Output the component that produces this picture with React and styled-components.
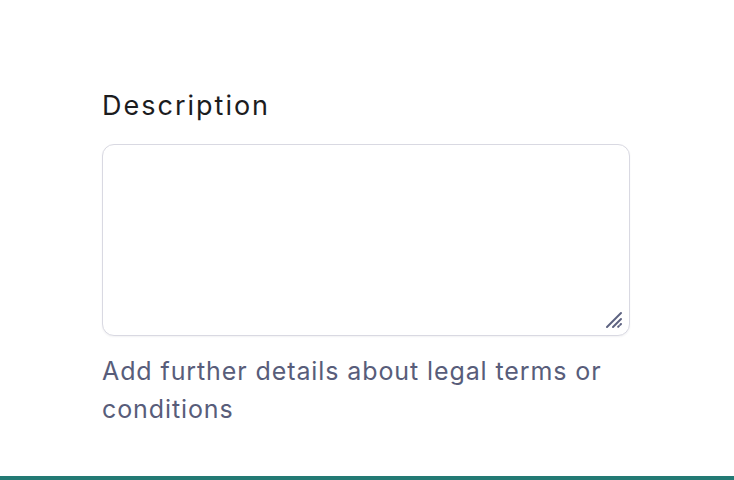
import styled, { createGlobalStyle } from "styled-components";

const GlobalStyle = createGlobalStyle`
  html, body {
    margin: 0;
    padding: 0;
    background: #ffffff;
    font-family: "Inter", "Liberation Sans", sans-serif;
  }
`;

const Page = styled.div`
  position: relative;
  height: 480px;
  box-sizing: border-box;
  padding: 86px 0 0 102px;
`;

const Field = styled.div`
  display: flex;
  flex-direction: column;
  width: 528px;
`;

const Label = styled.label`
  font-size: 27px;
  line-height: 40px;
  letter-spacing: 2px;
  color: #1c1c1e;
  margin-bottom: 18px;
`;

const AreaWrap = styled.div`
  position: relative;
  width: 528px;
  height: 192px;
`;

const TextArea = styled.textarea`
  box-sizing: border-box;
  display: block;
  width: 100%;
  height: 100%;
  border: 1px solid #d9d9e2;
  border-radius: 12px;
  box-shadow: 0 1px 2px rgba(30, 30, 60, 0.06);
  padding: 12px 16px;
  font-family: inherit;
  font-size: 20px;
  outline: none;
  resize: none;
`;

const Grip = styled.svg`
  position: absolute;
  right: 6px;
  bottom: 6px;
  width: 20px;
  height: 20px;
  pointer-events: none;
`;

const Hint = styled.p`
  margin: 16px 0 0;
  font-size: 25px;
  line-height: 38px;
  letter-spacing: 0.9px;
  color: #585d7a;
`;

const BottomBar = styled.div`
  position: absolute;
  left: 0;
  right: 0;
  bottom: 0;
  height: 4px;
  background: #237a74;
`;

export default function App() {
  return (
    <Page>
      <GlobalStyle />
      <Field>
        <Label htmlFor="desc">Description</Label>
        <AreaWrap>
          <TextArea id="desc" />
          <Grip viewBox="0 0 20 20">
            <g stroke="#5d6280" strokeWidth="2" strokeLinecap="round">
              <line x1="17" y1="3" x2="3" y2="17" />
              <line x1="17" y1="9" x2="9" y2="17" />
              <line x1="17" y1="14" x2="14" y2="17" strokeDasharray="1 2" />
            </g>
          </Grip>
        </AreaWrap>
        <Hint>Add further details about legal terms or conditions</Hint>
      </Field>
      <BottomBar />
    </Page>
  );
}
